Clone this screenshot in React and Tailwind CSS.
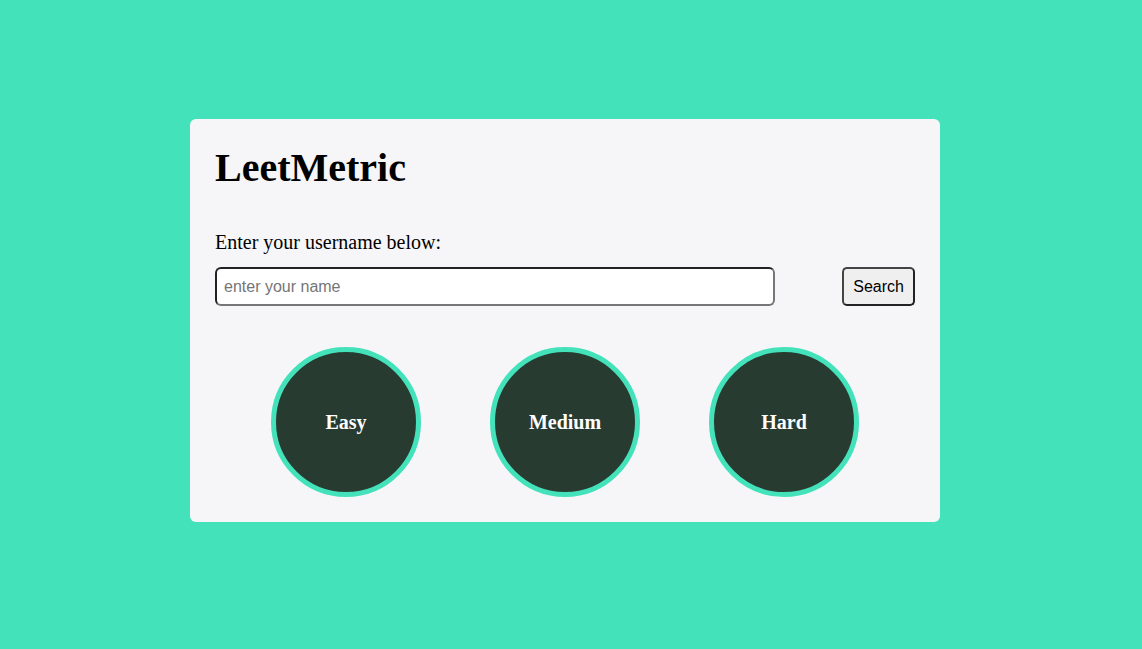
export default function App() {
  const levels = ['Easy', 'Medium', 'Hard']

  return (
    <div className="min-h-screen w-full bg-[#43e2ba] flex items-center justify-center">
      <div className="w-[750px] bg-[#f6f6f8] rounded-[6px] px-[25px] pt-[26px] pb-[25px] mt-[-8px] mr-[12px]">
        <h1 className="text-[40px] leading-[46px] font-bold text-black font-['Liberation_Serif',serif]">
          LeetMetric
        </h1>

        <p className="mt-[40px] text-[20px] leading-[23px] text-black font-['Liberation_Serif',serif]">
          Enter your username below:
        </p>

        <div className="mt-[13px] flex items-center justify-between">
          <input
            type="text"
            placeholder="enter your name"
            className="w-[560px] h-[39px] px-[7px] bg-white rounded-[6px] border-2 border-[#767676] border-t-[#222] border-l-[#222] text-[16px] font-['Liberation_Sans',sans-serif] placeholder:text-[#757575] outline-none"
          />
          <button className="h-[39px] px-[9px] bg-[#efefef] rounded-[5px] border-2 border-[#222] border-t-[#444] border-l-[#444] text-[16px] text-black font-['Liberation_Sans',sans-serif]">
            Search
          </button>
        </div>

        <div className="mt-[41px] flex justify-center gap-[69px]">
          {levels.map((level) => (
            <div
              key={level}
              className="w-[150px] h-[150px] rounded-full bg-[#283b30] border-[5px] border-[#43e2ba] flex items-center justify-center"
            >
              <span className="text-[20px] font-bold text-white font-['Liberation_Serif',serif]">
                {level}
              </span>
            </div>
          ))}
        </div>
      </div>
    </div>
  )
}
